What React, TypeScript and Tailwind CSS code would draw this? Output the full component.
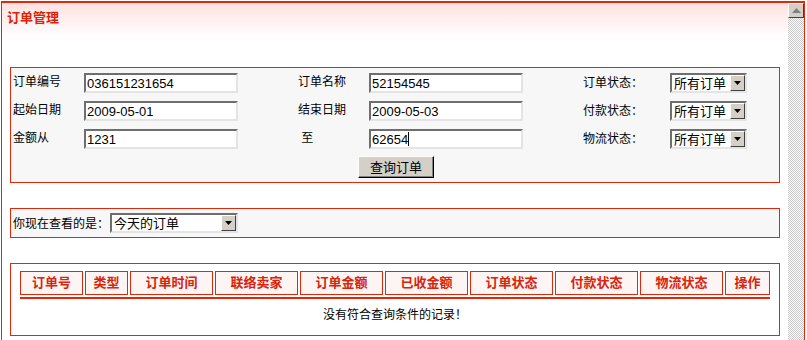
import React from "react";

// 订单管理 — search form + result table
const red = "border-[#e0280a]";

function TextBox({ value, caret }: { value: string; caret?: boolean }) {
  return (
    <div className="w-[154px] h-[20px] bg-white border-2 border-t-[#6e6e6e] border-l-[#6e6e6e] border-b-[#e4e4e4] border-r-[#e4e4e4] flex items-center pl-px text-[13px] leading-none font-['Liberation_Sans',sans-serif]">
      {value}
      {caret && <span className="inline-block w-px h-[14px] bg-black" />}
    </div>
  );
}

function DropArrow() {
  return (
    <div className="w-[15px] h-[16px] bg-[#d4d0c8] border border-t-white border-l-white border-b-[#404040] border-r-[#404040] flex items-center justify-center">
      <svg width="7" height="4" viewBox="0 0 7 4">
        <path d="M0 0h7L3.5 4z" fill="#000" />
      </svg>
    </div>
  );
}

function Select({ value, width }: { value: string; width: string }) {
  return (
    <div
      className={`${width} h-[20px] bg-white border-2 border-t-[#6e6e6e] border-l-[#6e6e6e] border-b-[#e4e4e4] border-r-[#e4e4e4] flex items-center justify-between pl-[2px] text-[13px] leading-none`}
    >
      <span>{value}</span>
      <DropArrow />
    </div>
  );
}

const rows = [
  ["订单编号", "036151231654", "订单名称", "52154545", "订单状态："],
  ["起始日期", "2009-05-01", "结束日期", "2009-05-03", "付款状态："],
  ["金额从", "1231", " 至", "62654", "物流状态："],
];

const heads: [string, string][] = [
  ["订单号", "w-[63px]"],
  ["类型", "w-[43px]"],
  ["订单时间", "w-[83px]"],
  ["联络卖家", "w-[83px]"],
  ["订单金额", "w-[83px]"],
  ["已收金额", "w-[83px]"],
  ["订单状态", "w-[83px]"],
  ["付款状态", "w-[83px]"],
  ["物流状态", "w-[83px]"],
  ["操作", "w-[45px]"],
];

export default function App() {
  return (
    <div className="w-[807px] h-[340px] bg-white overflow-hidden text-[12px] text-black font-['Liberation_Sans','Noto_Sans_CJK_SC',sans-serif]">
      <div className={`ml-px mt-px w-[804px] h-[345px] border-t-2 border-x ${red} flex`}>
        <div className="flex-1 min-w-0">
          {/* title bar */}
          <div className="h-[35px] bg-gradient-to-b from-[#ffe2e2] to-white pl-[5px] pt-[5px]">
            <span className="font-bold text-[#d9230a] text-[13px]">订单管理</span>
          </div>

          {/* search */}
          <div className={`mt-[29px] mx-[8px] h-[116px] border ${red} bg-[#f7f7f7] pt-[5px] pl-[2px]`}>
            <div className="flex flex-col gap-[8px]">
              {rows.map((r, i) => (
                <div key={i} className="grid grid-cols-[71px_214px_71px_214px_87px_auto] items-center h-[20px]">
                  <span className="-mt-[3px] whitespace-pre">{r[0]}</span>
                  <TextBox value={r[1]} />
                  <span className="-mt-[3px] whitespace-pre">{r[2]}</span>
                  <TextBox value={r[3]} caret={i === 2} />
                  <span className="-mt-[3px] font-['Noto_Sans_CJK_SC',sans-serif]">{r[4]}</span>
                  <Select value="所有订单" width="w-[77px]" />
                </div>
              ))}
            </div>
            <div className="flex justify-center mt-[7px]">
              <button className="w-[76px] h-[22px] bg-[#d4d0c8] border border-t-white border-l-white border-b-black border-r-black shadow-[inset_-1px_-1px_0_#808080] text-[13px] leading-none">
                查询订单
              </button>
            </div>
          </div>

          {/* current view */}
          <div className={`mt-[25px] mx-[8px] h-[30px] border ${red} bg-[#f7f7f7] flex items-center pl-[2px]`}>
            <span className="w-[97px] font-['Noto_Sans_CJK_SC',sans-serif]">你现在查看的是：</span>
            <Select value="今天的订单" width="w-[128px]" />
          </div>

          {/* result table */}
          <div className={`mt-[25px] mx-[8px] h-[73px] border ${red} bg-white pt-[7px] px-[9px]`}>
            <div className="flex gap-[2px]">
              {heads.map(([h, w]) => (
                <div
                  key={h}
                  className={`${w} h-[24px] border ${red} bg-[#fdf4f4] flex items-center justify-center font-bold text-[13px] text-[#d9230a]`}
                >
                  {h}
                </div>
              ))}
            </div>
            <div className="mt-[2px] w-[750px] h-[2px] bg-[#e0280a]" />
            <div className="w-[750px] text-center mt-[6px] font-['Noto_Sans_CJK_SC',sans-serif]">没有符合查询条件的记录！</div>
          </div>
        </div>

        {/* scrollbar */}
        <div className="w-[16px] bg-[repeating-conic-gradient(#c8c8c8_0%_25%,#ffffff_0%_50%)] bg-[length:2px_2px]">
          <div className="h-[15px] bg-[#d4d0c8] border border-t-white border-l-white border-b-[#404040] border-r-[#404040] flex items-center justify-center">
            <svg width="9" height="5" viewBox="0 0 9 5">
              <path d="M0 5h9L4.5 0z" fill="#808080" />
            </svg>
          </div>
        </div>
      </div>
    </div>
  );
}
